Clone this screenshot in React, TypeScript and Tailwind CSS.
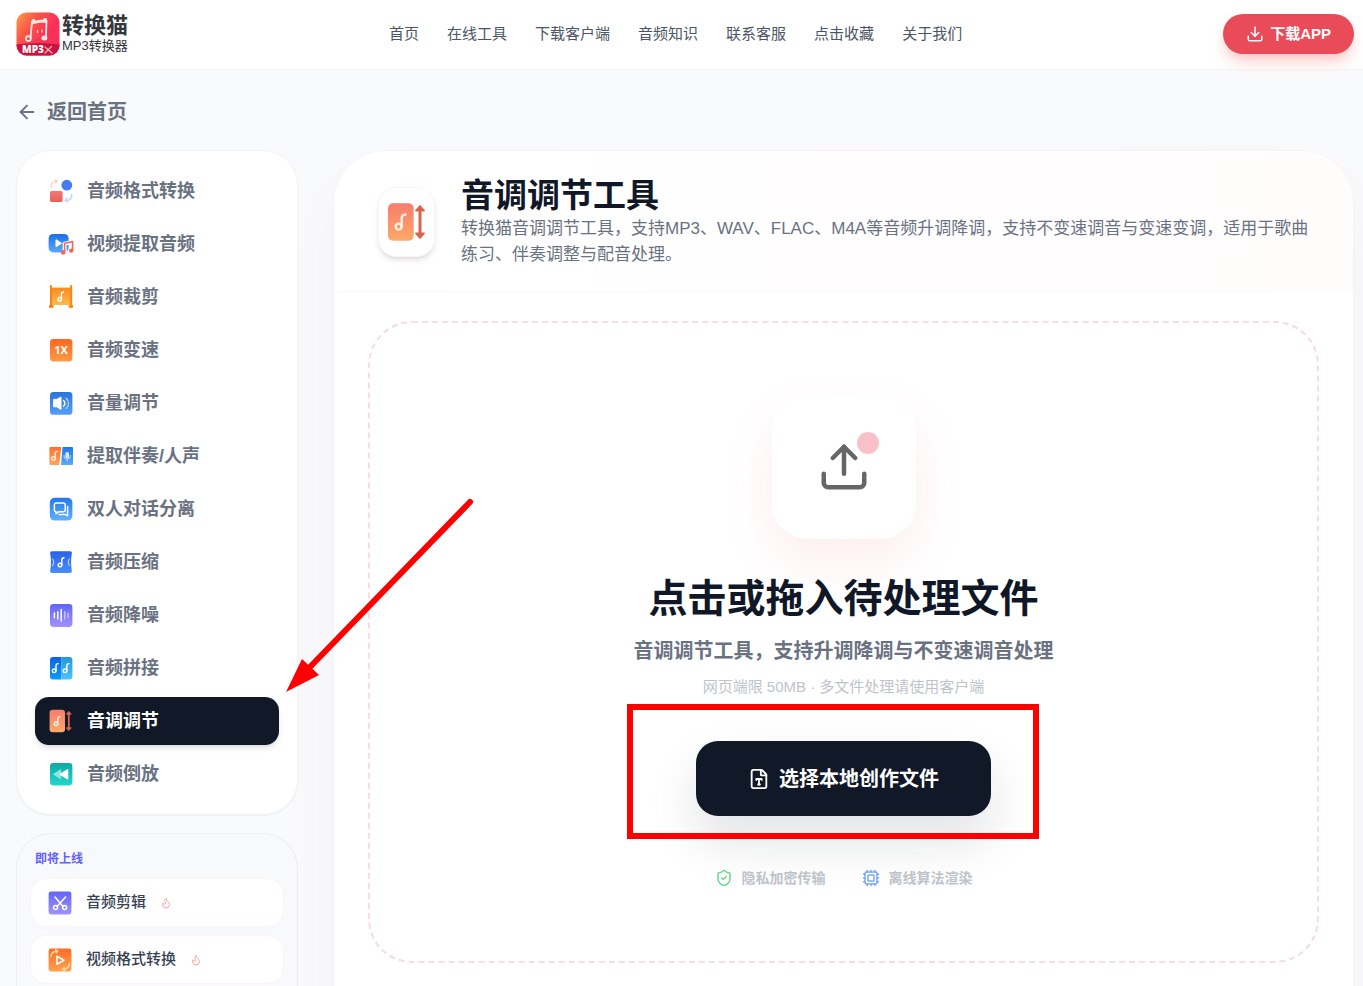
import { useState, type ReactNode } from 'react';
import {
  ArrowLeft,
  Cpu,
  Download,
  FileType,
  Flame,
  ShieldCheck,
  Upload,
} from 'lucide-react';

const navLinks = ['首页', '在线工具', '下载客户端', '音频知识', '联系客服', '点击收藏', '关于我们'];

function Gradient({ id, from, to }: { id: string; from: string; to: string }) {
  return (
    <linearGradient id={id} x1="0" y1="0" x2="0" y2="1">
      <stop offset="0" stopColor={from} />
      <stop offset="1" stopColor={to} />
    </linearGradient>
  );
}

// Small eighth note, centred on x / y
function Note({ x, y, color = '#fff' }: { x: number; y: number; color?: string }) {
  return (
    <g transform={`translate(${x} ${y})`} fill="none" stroke={color} strokeWidth="1.4" strokeLinecap="round">
      <circle cx="-1" cy="2.8" r="1.8" />
      <path d="M0.8 2.8V-2.2C0.8 -3.9 1.6 -4.4 3 -4.4" />
    </g>
  );
}

function Icon({ children, className = 'w-6 h-6' }: { children: ReactNode; className?: string }) {
  return (
    <svg viewBox="0 0 24 24" className={`${className} shrink-0`} aria-hidden="true">
      {children}
    </svg>
  );
}

function PitchIcon({ id, className }: { id: string; className?: string }) {
  return (
    <Icon className={className}>
      <defs><Gradient id={id} from="#f77d6d" to="#fda968" /></defs>
      <rect x="0.6" y="0.8" width="15.4" height="22.4" rx="3" fill={`url(#${id})`} />
      <Note x={8} y={12} color="#fff3e6" />
      <path d="M19.8 4v16" stroke="#d9634c" strokeWidth="1.8" />
      <path d="M19.8 2.4l-2.4 2.8h4.8zM19.8 21.6l-2.4-2.8h4.8z" fill="#d9634c" stroke="#d9634c" strokeWidth="1" strokeLinejoin="round" />
    </Icon>
  );
}

const tools = [
  {
    name: '音频格式转换',
    icon: (
      <Icon>
        <defs><Gradient id="fmt" from="#ef7b75" to="#ea5f59" /></defs>
        <rect x="1" y="12" width="12.6" height="11" rx="1.6" fill="url(#fmt)" />
        <circle cx="17.8" cy="6.2" r="5.4" fill="#427cf6" />
        <path d="M2 8C2 4 4 2 8 2M6 0.8L8.4 2 6.6 4.4" fill="none" stroke="#fbd5d2" strokeWidth="1.5" strokeLinecap="round" />
        <path d="M22.8 15.5c0 4-2 6-6 6M18.4 22.8l-2.2-1.3 1.6-2.4" fill="none" stroke="#bfd6fc" strokeWidth="1.5" strokeLinecap="round" />
      </Icon>
    ),
  },
  {
    name: '视频提取音频',
    icon: (
      <Icon className="w-6 h-6 overflow-visible">
        <defs><Gradient id="vid" from="#1c6de8" to="#5ba9fb" /></defs>
        <rect x="-0.4" y="2" width="20" height="18.4" rx="4.5" fill="url(#vid)" />
        <path d="M7 7.8v7l5.6-3.5z" fill="#fff" stroke="#fff" strokeLinejoin="round" />
        <g strokeLinejoin="round">
          <path d="M15.6 20.4V11.6l8-1.6v8.6" fill="none" stroke="#fff" strokeWidth="4" />
          <path d="M15.6 20.4V11.2l8-1.6v8.8" fill="none" stroke="#ee6a5f" strokeWidth="1.6" />
          <circle cx="14.2" cy="20.4" r="2.3" fill="#ee6a5f" />
          <circle cx="22.2" cy="18.6" r="2.2" fill="#ee6a5f" />
        </g>
      </Icon>
    ),
  },
  {
    name: '音频裁剪',
    icon: (
      <Icon>
        <defs><Gradient id="cut" from="#fb8a1e" to="#fdbb4d" /></defs>
        <rect x="2" y="2.6" width="20" height="17.4" fill="url(#cut)" />
        <path d="M2 1v21M22.2 1v21" stroke="#f98614" strokeWidth="2" strokeLinecap="round" />
        <path d="M0.8 21.4h2.6M20.8 21.4h2.6" stroke="#f98614" strokeWidth="2.6" strokeLinecap="round" />
        <Note x={11.6} y={11.4} />
      </Icon>
    ),
  },
  {
    name: '音频变速',
    icon: (
      <Icon>
        <defs><Gradient id="spd" from="#fc6722" to="#fe9a43" /></defs>
        <rect x="1" y="1" width="22.4" height="22.4" rx="3.4" fill="url(#spd)" />
        <text x="12" y="16.4" textAnchor="middle" fontSize="11" fontWeight="700" fontFamily="Open Sans, sans-serif" fill="#fff">1X</text>
      </Icon>
    ),
  },
  {
    name: '音量调节',
    icon: (
      <Icon>
        <defs><Gradient id="vol" from="#2b74d8" to="#559ff9" /></defs>
        <rect x="1" y="1" width="22.4" height="22.8" rx="3.4" fill="url(#vol)" />
        <path d="M4.6 8.4h3.2L12 6v12.6l-4.2-2.8H4.6z" fill="#fff" stroke="#fff" strokeLinejoin="round" />
        <path d="M14.6 9.4c1.8 1.7 1.8 4.2 0 5.9" fill="none" stroke="#fff" strokeWidth="1.4" strokeLinecap="round" />
        <path d="M17.2 7.2c3.2 3 3.2 7.3 0 10.3" fill="none" stroke="#a8cffc" strokeWidth="1.4" strokeLinecap="round" />
      </Icon>
    ),
  },
  {
    name: '提取伴奏/人声',
    icon: (
      <Icon>
        <defs>
          <Gradient id="acc" from="#fb7233" to="#fda65d" />
          <Gradient id="voc" from="#2276e5" to="#56abfb" />
        </defs>
        <path d="M1.4 3h10.8L10.4 21H1.4a1 1 0 0 1-1-1V4a1 1 0 0 1 1-1z" fill="url(#acc)" />
        <path d="M13.6 3H23a1 1 0 0 1 1 1v16a1 1 0 0 1-1 1H12z" fill="url(#voc)" />
        <Note x={5.4} y={11.8} color="#ffe9d8" />
        <rect x="16.4" y="8" width="3.6" height="6.6" rx="1.8" fill="#d9ecff" />
        <path d="M15 11.6c0 4.8 6.4 4.8 6.4 0M18.2 15.4v1.6" fill="none" stroke="#a9d1fd" strokeWidth="1.1" strokeLinecap="round" />
      </Icon>
    ),
  },
  {
    name: '双人对话分离',
    icon: (
      <Icon>
        <defs><Gradient id="dlg" from="#2577ea" to="#5fb2fc" /></defs>
        <rect x="0.8" y="0.8" width="22.6" height="22.8" rx="5" fill="url(#dlg)" />
        <path d="M7.4 6h6.8a2 2 0 0 1 2 2v4.800a2 2 0 0 1-2 2H9.600l-2.600 1.800V14.800a1.800 1.800 0 0 1-1.600-2V8a2 2 0 0 1 2-2z" fill="none" stroke="#fff" strokeWidth="1.5" strokeLinejoin="round" />
        <path d="M18.600 9.600v9.200l-2.600-1.400h-6" fill="none" stroke="#fff" strokeWidth="1.5" strokeLinejoin="round" strokeLinecap="round" />
      </Icon>
    ),
  },
  {
    name: '音频压缩',
    icon: (
      <Icon>
        <defs><Gradient id="zip" from="#2a60e6" to="#4a8dfa" /></defs>
        <path d="M3.2 1.2h17.600a2 2 0 0 1 2 2.400c-1 5.600-1 11.400 0 17a2 2 0 0 1-2 2.400H3.200a2 2 0 0 1-2-2.400c1-5.600 1-11.400 0-17a2 2 0 0 1 2-2.400z" fill="url(#zip)" />
        <Note x={12} y={12.2} />
        <path d="M3.6 9c1.400 2 1.400 4.400 0 6.400M20.400 9c-1.400 2-1.400 4.400 0 6.400" fill="none" stroke="#bcd4ff" strokeWidth="1.1" strokeLinecap="round" />
      </Icon>
    ),
  },
  {
    name: '音频降噪',
    icon: (
      <Icon>
        <defs><Gradient id="dns" from="#5f65f8" to="#a193fb" /></defs>
        <rect x="1" y="1" width="22.4" height="23" rx="3.4" fill="url(#dns)" />
        <path d="M5.4 10v4.8M8.8 8.800v7.200M12.2 6.4V18" stroke="#fff" strokeWidth="1.5" strokeLinecap="round" />
        <path d="M15.8 8.800v7.200M19.2 10v4.8" stroke="#c6c1fd" strokeWidth="1.5" strokeLinecap="round" />
      </Icon>
    ),
  },
  {
    name: '音频拼接',
    icon: (
      <Icon>
        <defs>
          <Gradient id="jna" from="#0f62e2" to="#0a9bfc" />
          <Gradient id="jnb" from="#2496dc" to="#4dc3fb" />
        </defs>
        <path d="M4 1h8.2v22.4H4a3 3 0 0 1-3-3V4a3 3 0 0 1 3-3z" fill="url(#jna)" />
        <path d="M12.2 1h8.2a3 3 0 0 1 3 3v16.4a3 3 0 0 1-3 3h-8.2z" fill="url(#jnb)" />
        <Note x={6.2} y={12} />
        <Note x={17} y={12} />
      </Icon>
    ),
  },
  { name: '音调调节', icon: <PitchIcon id="pitch-sm" /> },
  {
    name: '音频倒放',
    icon: (
      <Icon>
        <defs><Gradient id="rev" from="#0da9a4" to="#22d8cd" /></defs>
        <rect x="1" y="1" width="22.4" height="22.4" rx="3.4" fill="url(#rev)" />
        <path d="M11.6 7.8v9L4.6 12.3z" fill="#8fe3de" stroke="#8fe3de" strokeLinejoin="round" />
        <path d="M18.8 7.4v9.8l-8.2-4.900z" fill="#fff" stroke="#fff" strokeLinejoin="round" />
      </Icon>
    ),
  },
];

const upcoming = [
  {
    name: '音频剪辑',
    icon: (
      <Icon>
        <defs><Gradient id="clip" from="#6364f9" to="#a094fb" /></defs>
        <rect x="0.6" y="0.6" width="22.8" height="22.8" rx="2.4" fill="url(#clip)" />
        <g fill="none" stroke="#fff" strokeWidth="1.5" strokeLinecap="round">
          <path d="M7 6l8 9.4M17.6 6L9 15.4" />
          <circle cx="7.6" cy="16.4" r="2" />
          <circle cx="16.6" cy="16.4" r="2" />
        </g>
      </Icon>
    ),
  },
  {
    name: '视频格式转换',
    icon: (
      <Icon>
        <defs><Gradient id="vfc" from="#fc6d24" to="#fda24d" /></defs>
        <rect x="0.6" y="0.6" width="22.8" height="22.8" rx="2.4" fill="url(#vfc)" />
        <path d="M9 8.2v8l7-4z" fill="none" stroke="#fff" strokeWidth="1.6" strokeLinejoin="round" />
        <path d="M2.8 8.6C3.2 5 5.6 3.2 9 3M7.8 1.8L9.6 3 8.2 4.8M21.6 15.4c-.4 3.6-2.8 5.6-6.2 5.8M16.6 22.4l-1.8-1.2 1.4-1.8" fill="none" stroke="#ffd3a6" strokeWidth="1.5" strokeLinecap="round" />
      </Icon>
    ),
  },
];

function Logo() {
  return (
    <a href="#" className="flex items-center gap-[2px]">
      <svg viewBox="0 0 44 44" className="w-11 h-11" aria-hidden="true">
        <defs>
          <linearGradient id="logo-bg" x1="0" y1="0" x2="1" y2="0.7">
            <stop offset="0" stopColor="#fda545" />
            <stop offset="0.35" stopColor="#fb5549" />
            <stop offset="0.7" stopColor="#fb3059" />
            <stop offset="1" stopColor="#f92f5b" />
          </linearGradient>
          <clipPath id="logo-clip"><rect x="0.5" y="0.5" width="43" height="43" rx="10" /></clipPath>
        </defs>
        <g clipPath="url(#logo-clip)">
          <rect width="44" height="44" fill="url(#logo-bg)" />
          <path d="M0 32.500Q22 29.500 44 32.500V44H0z" fill="#c8143c" />
        </g>
        <path d="M14.5 26L16 9.500M30.500 8.500L30 25" fill="none" stroke="#ffeae2" strokeWidth="1.800" strokeLinecap="round" />
        <path d="M16 12.500V7.500c1.600-1 2.800-.4 4.200 1.200 2-.9 4.200-1.100 6.400-.8 1-1.800 2.400-2.300 4.200-1.400v4.500c-5-.6-10.500 0-14.800 1.500z" fill="#ffeae2" />
        <circle cx="12.400" cy="26.600" r="2.500" fill="none" stroke="#ffeae2" strokeWidth="1.600" />
        <ellipse cx="28.400" cy="26" rx="3" ry="2.500" fill="#ffeae2" />
        <path d="M21.500 18.500v2M26 18v2" stroke="#ffd9d4" strokeWidth="1.300" strokeLinecap="round" />
        <text x="6" y="41" fontSize="10" fontWeight="800" fontFamily="Open Sans, sans-serif" fill="#fff">MP3</text>
        <path d="M29 35l7 6M35.500 34.500L29 41" stroke="#f6a9b6" strokeWidth="1.400" strokeLinecap="round" />
      </svg>
      <span className="flex flex-col text-[#34373c]">
        <span className="text-[22px] leading-6 font-bold">转换猫</span>
        <span className="text-[13px] leading-4">MP3转换器</span>
      </span>
    </a>
  );
}

// Pointer from the work area to the selected tool
function PointerArrow() {
  return (
    <svg viewBox="0 0 188 195" className="absolute left-[251px] bottom-[52px] w-[188px] h-[195px] pointer-events-none" aria-hidden="true">
      <path d="M184 4L24 169" stroke="#f00" strokeWidth="6" strokeLinecap="round" />
      <path d="M0 194L16 161L33 177z" fill="#f00" />
    </svg>
  );
}

export default function App() {
  const [active, setActive] = useState('音调调节');

  return (
    <div className="min-h-screen bg-[#f9fafc] overflow-hidden font-['Liberation_Sans','Noto_Sans_CJK_SC',sans-serif] text-gray-900">
      {/* Header */}
      <header className="h-[70px] bg-white border-b border-gray-100 pl-4 pr-[9px] pb-px flex items-center justify-between">
        <Logo />
        <nav className="flex items-center gap-7">
          {navLinks.map(link => (
            <a key={link} href="#" className="text-[15px] leading-6 text-gray-600 hover:text-gray-900">{link}</a>
          ))}
        </nav>
        <button className="relative h-10 px-[23px] flex items-center gap-[6px] rounded-full bg-[#e94b58] text-white text-[15px] font-bold shadow-lg shadow-red-200">
          <Download className="w-[18px] h-[18px]" />
          下载APP
        </button>
      </header>

      <div className="pl-4 pr-[9px] pt-7">
        <a href="#" className="inline-flex items-center gap-[9px] text-gray-500">
          <ArrowLeft className="w-[22px] h-[22px]" />
          <span className="text-[20px] leading-7 font-bold">返回首页</span>
        </a>

        <div className="mt-5 flex items-start gap-[35px]">
          {/* Tool list */}
          <aside className="relative z-10 w-[282px] shrink-0 space-y-[18px]">
            <ul className="bg-white rounded-[35px] border border-gray-100 shadow-xs px-[18px] py-4 space-y-[5px]">
              {tools.map(tool => (
                <li key={tool.name} className="relative">
                  <button
                    onClick={() => setActive(tool.name)}
                    className={
                      active === tool.name
                        ? 'w-full h-12 px-[14px] flex items-center gap-[14px] rounded-[14px] bg-[#111827] text-white text-[18px] font-bold shadow-md'
                        : 'w-full h-12 px-[14px] flex items-center gap-[14px] rounded-[14px] text-gray-500 text-[18px] font-bold hover:bg-gray-50'
                    }
                  >
                    {tool.icon}
                    {tool.name}
                  </button>
                  {tool.name === '音调调节' && <PointerArrow />}
                </li>
              ))}
            </ul>

            <section className="rounded-[35px] border border-[#ebecf4] bg-[#f8f9fd] px-[13px] pt-[17px] pb-16">
              <h2 className="pl-[5px] text-[12px] leading-4 font-bold text-indigo-500">即将上线</h2>
              <ul className="mt-[11px] space-y-2">
                {upcoming.map(item => (
                  <li key={item.name} className="h-[49px] px-[17px] flex items-center gap-[14px] bg-white rounded-2xl border border-red-50">
                    {item.icon}
                    <span className="text-[15px] font-medium text-gray-700">{item.name}</span>
                    <Flame className="w-3 h-3 text-red-300" />
                  </li>
                ))}
              </ul>
            </section>
          </aside>

          {/* Work area */}
          <main className="flex-1 min-w-0 bg-white rounded-[53px] border border-gray-100 shadow-[0_28px_60px_rgba(160,60,60,0.05)] overflow-hidden">
            <div className="h-[141px] pl-11 pr-7 pt-px flex items-center gap-[26px] border-b border-gray-50 bg-linear-to-r from-white to-[#fffcfc]">
              <div className="w-[57px] h-[70px] shrink-0 rounded-[18px] bg-white border border-red-50 shadow-md flex items-center justify-center">
                <PitchIcon id="pitch-lg" className="w-10 h-10" />
              </div>
              <div>
                <h1 className="text-[33px] leading-10 font-bold">音调调节工具</h1>
                <p className="text-[17px] leading-[26px] text-gray-500">
                  转换猫音调调节工具，支持MP3、WAV、FLAC、M4A等音频升调降调，支持不变速调音与变速变调，适用于歌曲练习、伴奏调整与配音处理。
                </p>
              </div>
            </div>

            <div className="px-[34px] pt-[29px] pb-24">
              <div className="rounded-[44px] border-2 border-dashed border-[#f5dde1] py-[72px] flex flex-col items-center">
                <div className="w-36 h-36 rounded-[35px] bg-white flex items-center justify-center shadow-[0_22px_50px_rgba(233,75,88,0.1)]">
                  <div className="relative">
                    <Upload className="w-[54px] h-[54px] text-[#666]" />
                    <span className="absolute -top-2 -right-2 w-[22px] h-[22px] rounded-full bg-[#f8c1c7]" />
                  </div>
                </div>

                <h2 className="mt-9 text-[39px] leading-[48px] font-bold">点击或拖入待处理文件</h2>
                <p className="mt-[14px] text-[20px] leading-7 font-bold text-gray-500">音调调节工具，支持升调降调与不变速调音处理</p>
                <p className="mt-[11px] text-[15px] leading-[22px] text-[#bfc3ca]">网页端限 50MB · 多文件处理请使用客户端</p>

                <div className="relative mt-[43px]">
                  <button className="h-[75px] px-[52px] flex items-center gap-[9px] rounded-[22px] bg-[#111827] text-white text-[20px] font-bold shadow-[0_25px_50px_rgba(17,24,39,0.12)]">
                    <FileType className="w-[22px] h-[22px]" />
                    选择本地创作文件
                  </button>
                  <div className="absolute -top-[37px] -bottom-[23px] -left-[69px] -right-12 border-6 border-[#f00] pointer-events-none" />
                </div>

                <div className="mt-[51px] flex items-center gap-9 text-[14px] leading-[22px] font-bold text-[#c0c4cb]">
                  <span className="flex items-center gap-[9px]">
                    <ShieldCheck className="w-[18px] h-[18px] text-[#6bd893]" />
                    隐私加密传输
                  </span>
                  <span className="flex items-center gap-[9px]">
                    <Cpu className="w-[18px] h-[18px] text-[#7aaaf8]" />
                    离线算法渲染
                  </span>
                </div>
              </div>
            </div>
          </main>
        </div>
      </div>
    </div>
  );
}
